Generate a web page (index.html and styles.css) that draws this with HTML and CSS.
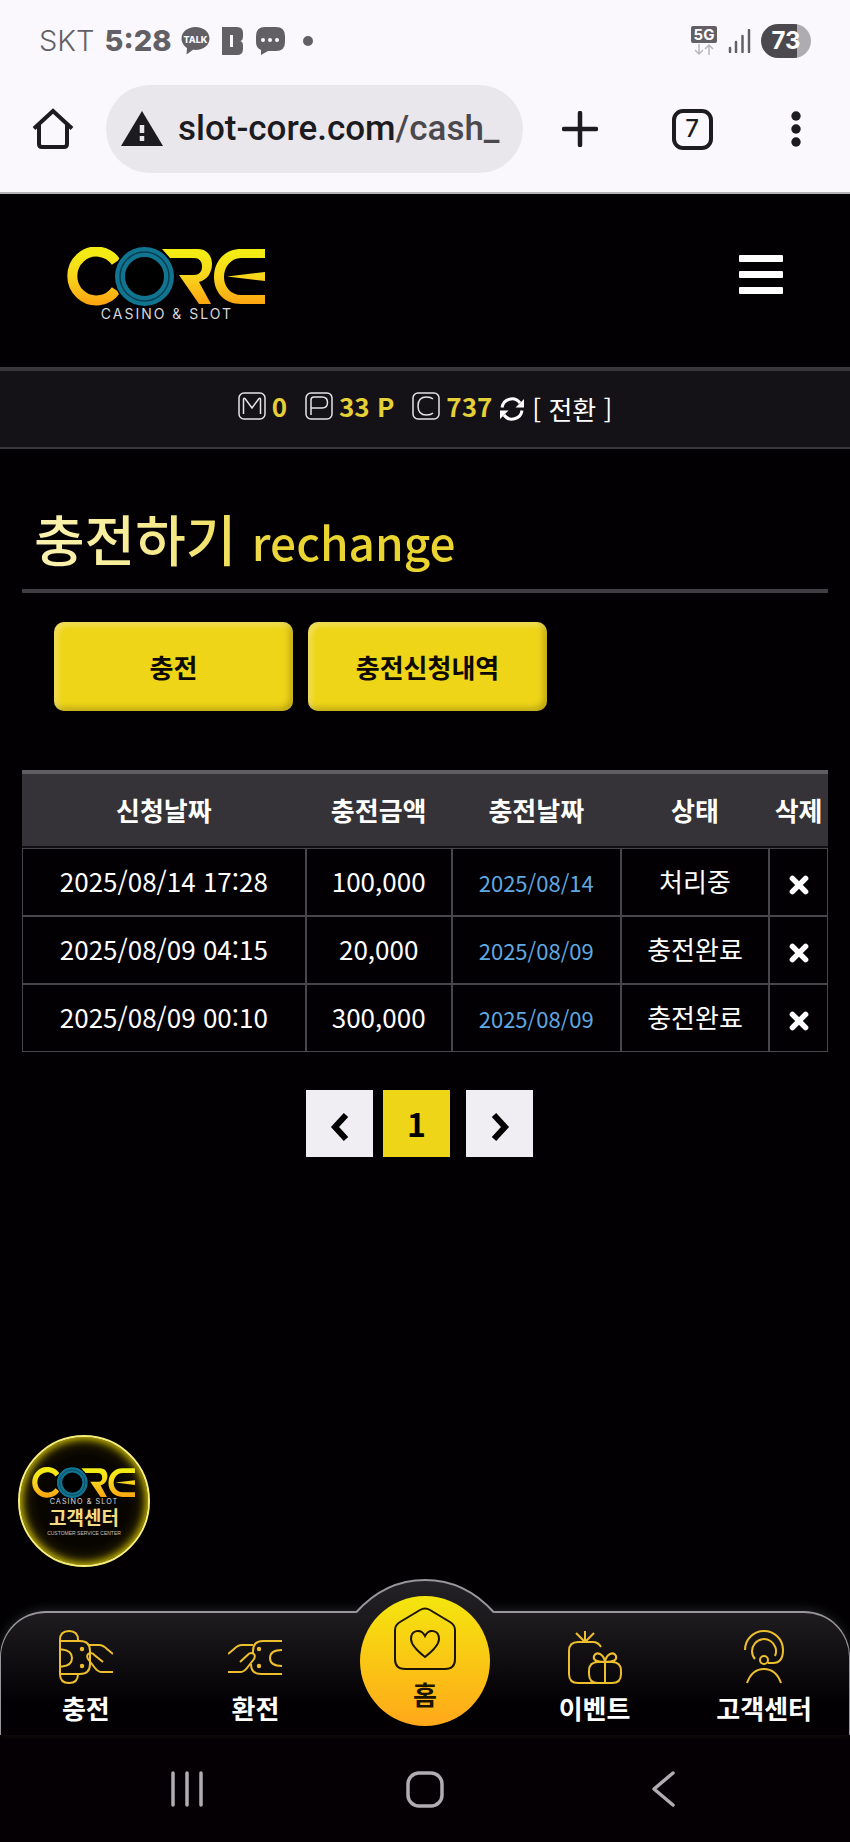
FILE: index.html
```html
<!DOCTYPE html>
<html lang="ko">
<head>
<meta charset="utf-8">
<meta name="viewport" content="width=device-width, initial-scale=1">
<title>충전하기</title>
<link rel="stylesheet" href="styles.css">
</head>
<body>
<svg width="0" height="0" class="defs" aria-hidden="true">
  <defs>
    <linearGradient id="gold" gradientUnits="userSpaceOnUse" x1="0" y1="0" x2="0" y2="58">
      <stop offset="0.1" stop-color="#f3ec14"/><stop offset="0.5" stop-color="#f8d51c"/><stop offset="1" stop-color="#fca311"/>
    </linearGradient>
    <symbol id="core" viewBox="0 0 200 74">
      <path d="M49 15A24 24.500 0 1 0 49 43" fill="none" stroke="url(#gold)" stroke-width="10"/>
      <path d="M95 2H131c9 0 14 7 14 15c0 9-5 16-13 18L144 57H132L112 28H127c5 0 8-3 8-8.500s-3-8.500-8-8.500H103Z" fill="url(#gold)"/>
      <path d="M198 2H174c-16 0-27 12-27 28s11 27 27 27h24v-9h-24c-10 0-17-8-17-18s7-19 17-19h24zM160 29.500L198 25v9z" fill="url(#gold)"/>
      <circle cx="77.500" cy="29.500" r="31" fill="#000"/>
      <circle cx="77.500" cy="29.500" r="24.500" fill="none" stroke="#117592" stroke-width="10"/>
      <circle cx="77.500" cy="29.500" r="24.500" fill="none" stroke="#073f52" stroke-width="1.500"/>
      <text x="100" y="71.500" text-anchor="middle" class="core-sub">CASINO &amp; SLOT</text>
    </symbol>
    <symbol id="x" viewBox="0 0 20 20"><path d="M4 4l12 12M16 4L4 16" stroke="#fff" stroke-width="5" stroke-linecap="round"/></symbol>
  </defs>
</svg>

<div class="status">
  <span class="carrier">SKT</span>
  <span class="clock">5:28</span>
  <div class="notices">
  <svg class="talk" width="29" height="28" viewBox="0 0 29 28"><path d="M14.500 0C6.500 0 .5 5 .5 11.500c0 4 2.500 7.500 5.500 9.500L5.500 27.500l6.500-4.700c10 1 16.500-4.300 16.500-11.300C28.500 5 22.500 0 14.500 0z" fill="#626065"/><text x="14.500" y="15.500" text-anchor="middle" class="talk-text">TALK</text></svg>
  <svg width="22" height="28" viewBox="0 0 22 28"><path d="M0 0H15q6 0 6 6v4q0 3-2.500 4q2.500 1 2.500 4v4q0 6-6 6H0z" fill="#626065"/><path d="M9.500 8v12" stroke="#faf8fd" stroke-width="3"/></svg>
  <svg width="29" height="28" viewBox="0 0 29 28"><path d="M9 0h11q9 0 9 9v6q0 9-9 9h-8l-7 4v-5Q0 21 0 15V9Q0 0 9 0z" fill="#626065"/><g fill="#faf8fd"><circle cx="7" cy="13" r="2"/><circle cx="14" cy="13" r="2"/><circle cx="21" cy="13" r="2"/></g></svg>
  <span class="dot"></span>
  </div>
  <svg class="net" width="27" height="30" viewBox="0 0 27 30"><rect width="26" height="17" rx="2" fill="#626065"/><text x="13" y="14" text-anchor="middle" class="net-text">5G</text><path d="M8 18v10M4 24l4 4l4-4M18 29V19M14 23l4-4l4 4" fill="none" stroke="#b9b7bc" stroke-width="1.500"/></svg>
  <svg width="23" height="24" viewBox="0 0 23 24"><path d="M2 19v4M8 13v10M14.500 7v16M21 1v22" stroke="#626065" stroke-width="2.500" stroke-linecap="round"/></svg>
  <span class="battery">73</span>
</div>

<div class="toolbar">
  <button class="tool" aria-label="홈페이지"><svg width="42" height="42" viewBox="0 0 42 42"><path d="M2 20.500L21 3l19 17.500M7 17v19q0 3 3 3h22q3 0 3-3V17" fill="none" stroke="#1c1b1f" stroke-width="4"/></svg></button>
  <div class="address">
    <svg width="42" height="36" viewBox="0 0 42 36"><path d="M21 0L42 35H0z" fill="#1c1b1f"/><path d="M21 14v8M21 25v5" stroke="#e9e7ec" stroke-width="4.500"/></svg>
    <span class="url">slot-core.com<span class="path">/cash_</span></span>
  </div>
  <div class="tools">
    <button class="tool" aria-label="새 탭"><svg width="36" height="36" viewBox="0 0 36 36"><path d="M18 2v32M2 18h32" stroke="#1c1b1f" stroke-width="4.500" stroke-linecap="round"/></svg></button>
    <button class="tabs" aria-label="탭 7개">7</button>
    <button class="tool" aria-label="더보기"><svg width="20" height="36" viewBox="0 0 20 36"><g fill="#1c1b1f"><circle cx="10" cy="5" r="4.700"/><circle cx="10" cy="18" r="4.700"/><circle cx="10" cy="31" r="4.700"/></g></svg></button>
  </div>
</div>

<header class="header">
  <a href="#" aria-label="CORE"><svg class="logo" width="200" height="74"><use href="#core"/></svg></a>
  <button class="tool" aria-label="메뉴"><svg width="44" height="40" viewBox="0 0 44 40"><g fill="#fff"><rect width="44" height="7" rx="1"/><rect y="16" width="44" height="7" rx="1"/><rect y="32" width="44" height="7" rx="1"/></g></svg></button>
</header>

<div class="wallet">
  <span class="coin"><svg width="28" height="28" viewBox="0 0 28 28"><rect x="1" y="1" width="26" height="26" rx="5"/><path d="M5.500 22V7.500Q5.500 5.500 7 6.500L14 16l7-9.500q1.500-1 1.500 1V22"/></svg>0</span>
  <span class="coin"><svg width="28" height="28" viewBox="0 0 28 28"><rect x="1" y="1" width="26" height="26" rx="5"/><path d="M6 23V8q0-3 3-3h8q5.500 0 5.500 5.500T17 16H6"/></svg>33 P</span>
  <span class="coin"><svg width="28" height="28" viewBox="0 0 28 28"><rect x="1" y="1" width="26" height="26" rx="5"/><path d="M21 7q-2-2-6.500-2C9 5 6 8.500 6 14s3 9 8.500 9q4.500 0 6.500-2"/></svg>737</span>
  <button class="convert"><svg width="26" height="26" viewBox="0 0 26 26"><path d="M3 11.500A10 10 0 0 1 21 7M23 14.500A10 10 0 0 1 5 19" fill="none" stroke="#fff" stroke-width="3"/><path d="M25 3v8.500h-8.500zM1 23v-8.500h8.500z" fill="#fff"/></svg>[ 전환 ]</button>
</div>

<main class="main">
  <h1 class="title">충전하기 <small>rechange</small></h1>
  <div class="actions">
    <button class="action">충전</button>
    <button class="action">충전신청내역</button>
  </div>
  <table class="history">
    <colgroup><col class="c-time"><col class="c-amount"><col class="c-date"><col class="c-state"><col class="c-del"></colgroup>
    <thead><tr><th>신청날짜</th><th>충전금액</th><th>충전날짜</th><th>상태</th><th>삭제</th></tr></thead>
    <tbody>
      <tr><td>2025/08/14 17:28</td><td>100,000</td><td class="date">2025/08/14</td><td>처리중</td><td><button class="del" aria-label="삭제"><svg width="22" height="22"><use href="#x"/></svg></button></td></tr>
      <tr><td>2025/08/09 04:15</td><td>20,000</td><td class="date">2025/08/09</td><td>충전완료</td><td><button class="del" aria-label="삭제"><svg width="22" height="22"><use href="#x"/></svg></button></td></tr>
      <tr><td>2025/08/09 00:10</td><td>300,000</td><td class="date">2025/08/09</td><td>충전완료</td><td><button class="del" aria-label="삭제"><svg width="22" height="22"><use href="#x"/></svg></button></td></tr>
    </tbody>
  </table>
  <nav class="pager" aria-label="페이지">
    <a href="#" aria-label="이전"><svg width="20" height="30" viewBox="0 0 20 30"><path d="M16 3L5 15l11 12" fill="none" stroke="#000" stroke-width="6"/></svg></a>
    <a href="#" class="current">1</a>
    <a href="#" class="next" aria-label="다음"><svg width="20" height="30" viewBox="0 0 20 30"><path d="M4 3l11 12L4 27" fill="none" stroke="#000" stroke-width="6"/></svg></a>
  </nav>
  <a href="#" class="badge">
    <svg width="104" height="39"><use href="#core"/></svg>
    <strong>고객센터</strong>
    <span>CUSTOMER SERVICE CENTER</span>
  </a>
</main>

<nav class="dock">
  <svg class="hump" width="140" height="80" viewBox="0 0 140 80">
    <defs><linearGradient id="humpfill" x1="0" y1="0" x2="0" y2="1"><stop offset="0" stop-color="#242226"/><stop offset="1" stop-color="#1c1a1d"/></linearGradient></defs>
    <path d="M1 33.500Q30 1 70 1t69 32.500V36H1z" fill="url(#humpfill)"/>
    <path d="M1 33.500Q30 1 70 1t69 32.500" fill="none" stroke="#98969a" stroke-width="2"/>
  </svg>
  <a href="#"><svg width="54" height="54" viewBox="0 0 54 54"><path d="M1 10q0-9 9-9t9 9M1 10v34q0 9 9 9t9-9M1 11h20q10 0 10 10v13q0 10-10 10H1M1 19.500h2q10 1 10 8.500t-10 8.500H1"/><path d="M30 15h10q4 0 8 4l6 5M54 42H43q-4 0-7-4l-7-9q-2-4 1-5.500q3-1.500 6 2L44 32"/><g class="dots"><circle cx="23" cy="19" r="2.200"/><circle cx="23" cy="36" r="2.200"/></g></svg>충전</a>
  <a href="#"><svg width="54" height="54" viewBox="0 0 54 54"><path d="M54 11H35q-10 0-10 10v2M23 34q0 10 10 10H54M54 20q-12 0-12 8t12 8"/><path d="M25 15H14q-4 0-8 4l-6 5M0 42h12q4 0 7-4l7-9q2-4-1-5.500q-3-1.500-6 2L12 32"/><g class="dots"><circle cx="31" cy="19" r="2.200"/><circle cx="31" cy="36" r="2.200"/></g></svg>환전</a>
  <a href="#" class="home"><span class="disc"><svg width="64" height="64" viewBox="0 0 64 64"><path d="M27 3q5-3 10 0l20 12q5 3 5 8v29q0 10-10 10H12Q2 62 2 52V23q0-5 5-8zM32 50Q18 39 18 32c0-9 10-11 14-3c4-8 14-6 14 3Q46 39 32 50z"/></svg>홈</span></a>
  <a href="#"><svg width="54" height="54" viewBox="0 0 54 54"><path d="M33 17q-3-5-8-5H10q-9 0-9 9v23q0 9 9 9h34q9 0 9-9v-3q0-9-9-9H30q-9 0-9 9v3q0 9 9 9M17 12V1M17 12L8 3M17 12l9-9M37 53V32M37 32Q24 32 26 26q2-4 6-2q4 2 5 8q1-6 5-8q4-2 6 2q2 6-11 6"/></svg>이벤트</a>
  <a href="#"><svg width="54" height="54" viewBox="0 0 54 54"><path d="M8 20A19 19 0 1 1 46 20Q46 33 36 33H31M18 29A12 12 0 1 1 38 26M10 53Q15 39 27 39t17 14"/><circle cx="27" cy="30" r="4"/></svg>고객센터</a>
</nav>

<div class="system">
  <button class="tool" aria-label="최근 앱"><svg width="34" height="36" viewBox="0 0 34 36"><path d="M3 2v32M17 2v32M31 2v32" stroke="#b0acb1" stroke-width="3.500" stroke-linecap="round"/></svg></button>
  <button class="tool" aria-label="홈"><svg width="38" height="38" viewBox="0 0 38 38"><rect x="2" y="3" width="34" height="33" rx="11" fill="none" stroke="#b0acb1" stroke-width="3.500"/></svg></button>
  <button class="tool" aria-label="뒤로"><svg width="34" height="36" viewBox="0 0 34 36"><path d="M27 2L8 18l19 16" fill="none" stroke="#b0acb1" stroke-width="3.500" stroke-linecap="round" stroke-linejoin="round"/></svg></button>
</div>
</body>
</html>
```
FILE: styles.css
```css
* { box-sizing: border-box; }
body {
  margin: 0;
  min-height: 100vh;
  display: flex;
  flex-direction: column;
  background: #020003;
  color: #fff;
  font-family: "Noto Sans CJK KR", "Noto Sans", sans-serif;
  font-size: 26px;
}
svg { display: block; flex: none; }
a { color: inherit; text-decoration: none; }
button { font: inherit; color: inherit; margin: 0; padding: 0; border: 0; background: none; cursor: pointer; }
.defs { position: absolute; }

.status {
  display: flex;
  align-items: center;
  height: 82px;
  padding: 0 39px;
  gap: 10px;
  background: #faf8fd;
  color: #626065;
  font: 29px/36px Inter, sans-serif;
}
.carrier { font-weight: 300; }
.clock { font-weight: 800; }
.notices { display: flex; align-items: center; gap: 12px; }
.talk-text { font: 800 9px Inter, sans-serif; fill: #faf8fd; }
.dot { width: 10px; height: 10px; margin-left: 6px; border-radius: 50%; background: #626065; }
.net { margin-left: auto; }
.net-text { font: 700 15px Inter, sans-serif; fill: #fff; }
.battery {
  width: 50px;
  border-radius: 17px;
  background: linear-gradient(90deg, #4b494d 72%, #aeacb0 72%);
  color: #fff;
  font-size: 24px;
  font-weight: 700;
  line-height: 34px;
  text-align: center;
}

.toolbar {
  display: flex;
  align-items: center;
  height: 112px;
  padding: 0 44px 16px 32px;
  background: #faf8fd;
  border-bottom: 2px solid #b5b3b8;
}
.address {
  display: flex;
  align-items: center;
  gap: 15px;
  flex: 0 1 417px;
  height: 88px;
  margin-left: 32px;
  padding-left: 15px;
  border-radius: 44px;
  background: #e9e7ec;
  white-space: nowrap;
}
.url { color: #1c1b1f; font: 500 35px/44px Roboto, sans-serif; }
.path { color: #4b494d; }
.tools { flex: 1; display: flex; align-items: center; justify-content: space-between; margin-left: 39px; }
.tabs {
  width: 41px;
  height: 41px;
  border: 4px solid #1c1b1f;
  border-radius: 11px;
  color: #1c1b1f;
  font: 500 24px/32px Inter, sans-serif;
}

.header {
  display: flex;
  justify-content: space-between;
  align-items: flex-start;
  height: 173px;
  padding: 53px 67px 0;
}
.header .tool { margin-top: 8px; }
.core-sub { font: 400 14px Inter, sans-serif; letter-spacing: 2px; fill: #d8d8dc; }

.wallet {
  display: flex;
  justify-content: center;
  align-items: center;
  height: 82px;
  padding-bottom: 6px;
  border-top: 4px solid #38363a;
  border-bottom: 2px solid #38363a;
  background: #141216;
}
.coin {
  display: flex;
  align-items: center;
  gap: 6px;
  margin-right: 18px;
  color: #e6d037;
  font-size: 26px;
  font-weight: 700;
  line-height: 32px;
}
.coin:nth-child(3) { margin-right: 7px; }
.coin svg { fill: none; stroke: #e4e3e6; stroke-width: 1.500; }
.convert { display: flex; align-items: center; gap: 7px; padding-top: 6px; line-height: 32px; }

.main { position: relative; flex: 1; padding: 0 22px 44px; }
.title {
  margin: 0;
  padding: 56px 12px 16px;
  border-bottom: 4px solid #403e42;
  font-size: 55px;
  font-weight: 500;
  line-height: 64px;
  background: linear-gradient(90deg, #fbf3b5 0, #f6ea8e 140px, #ead42f 270px) padding-box text;
  color: transparent;
}
.title small { font-size: 46px; font-weight: 500; }
.actions { display: flex; gap: 15px; padding: 29px 32px 59px; }
.action {
  flex: 0 1 239px;
  height: 89px;
  border-radius: 10px;
  background: #eed518;
  box-shadow: inset 3px 3px 6px rgba(255, 255, 255, .35), inset -3px -3px 6px rgba(90, 70, 0, .35);
  color: #0c0a02;
  font-weight: 700;
}

.history { width: 100%; table-layout: fixed; border-collapse: separate; border-spacing: 0; text-align: center; line-height: 32px; }
.c-time { width: 35.2%; }
.c-amount { width: 18.1%; }
.c-date { width: 21%; }
.c-state { width: 18.4%; }
.c-del { width: 7.3%; }
th { height: 78px; padding: 0; background: #353337; border-top: 4px solid #5f5d61; border-bottom: 2px solid #110f13; font-weight: 700; white-space: nowrap; }
td { height: 68px; padding: 0 0 2px; border: 1px solid #48464a; }
.date { color: #5fa9e0; font-size: 22px; padding: 0; }
.del { display: block; margin: 7px auto 0; }

.pager { display: flex; justify-content: center; gap: 10px; margin: 38px 11px 0 0; padding-bottom: 200px; }
.pager a {
  display: grid;
  place-items: center;
  width: 67px;
  height: 67px;
  padding-top: 6px;
  background: #f0eef2;
  color: #000;
}
.pager .current { padding: 0 0 2px; background: #eed518; font-size: 32px; font-weight: 700; line-height: 40px; }
.pager .next { margin-left: 6px; }

.badge {
  position: absolute;
  left: 18px;
  bottom: 44px;
  width: 132px;
  height: 132px;
  padding-top: 30px;
  display: flex;
  flex-direction: column;
  align-items: center;
  border: 2px solid #f7ee7c;
  border-radius: 50%;
  background: radial-gradient(circle, #080500 50%, #2a2200 80%, #5d4e00 100%);
  box-shadow: inset 0 0 9px 2px #d8c800;
}
.badge strong { color: #f3dc86; font-size: 19px; line-height: 22px; }
.badge span { color: #c8c4bc; font: 5px/10px "Liberation Sans", sans-serif; white-space: nowrap; }

.dock {
  position: relative;
  display: grid;
  grid-template-columns: repeat(5, 1fr);
  height: 124px;
  border: solid #98969a;
  border-width: 2px 1px 0;
  border-radius: 46px 46px 0 0;
  background: linear-gradient(#1e1c1f, #020003 75%);
  box-shadow: 0 -2px 10px rgba(255, 255, 255, .12);
}
.hump { position: absolute; left: 50%; top: -34px; margin-left: -70px; }
.dock a { display: flex; flex-direction: column; align-items: center; padding-top: 17px; gap: 8px; font-weight: 700; line-height: 32px; white-space: nowrap; }
.dock a svg { fill: none; stroke: #eebf2c; stroke-width: 2; }
.dock .dots { fill: #eebf2c; stroke: none; }
.dock .home { position: relative; padding: 0; }
.disc {
  position: absolute;
  top: -17px;
  display: flex;
  flex-direction: column;
  align-items: center;
  gap: 9px;
  width: 130px;
  height: 130px;
  padding-top: 11px;
  border-radius: 50%;
  background: linear-gradient(#f4e60e, #ffa81a);
  color: #1a1400;
  font-size: 26px;
  line-height: 28px;
}
.dock .disc svg { stroke: #1a1400; }

.system { display: flex; justify-content: space-between; align-items: center; height: 107px; padding: 0 170px; background: #050003; }
```
